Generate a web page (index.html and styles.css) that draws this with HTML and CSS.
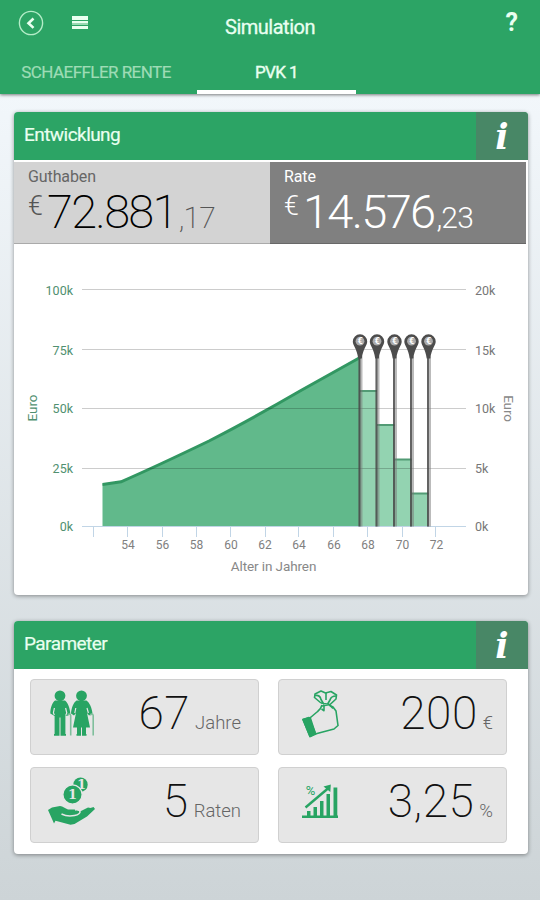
FILE: index.html
```html
<!DOCTYPE html>
<html lang="de">
<head>
    <meta charset="utf-8">
    <meta name="viewport" content="width=device-width, initial-scale=1">
    <title>Simulation</title>
    <link rel="stylesheet" href="styles.css">
</head>
<body>
    <header class="header">
        <div class="toolbar">
            <div class="toolbar-left">
                <svg class="back" viewBox="0 0 26 26">
                    <circle cx="13" cy="13" r="11.6"/>
                    <path class="arrow" d="M15.5 8.500l-5 4.700 5 4.700"/>
                </svg>
                <svg class="menu" viewBox="0 0 16 14">
                    <path d="M0 0h16v4H0zM0 5h16v2H0zM0 10h16v3H0z"/>
                    <path class="faded" d="M0 7h16v2H0z"/>
                </svg>
            </div>
            <h1 class="title">Simulation</h1>
            <div class="help">?</div>
        </div>
        <nav class="tabs">
            <div class="tab">SCHAEFFLER RENTE</div>
            <div class="tab active">PVK 1</div>
        </nav>
    </header>

    <main class="content">
        <section class="card">
            <div class="card-header">
                <h2 class="card-title">Entwicklung</h2>
                <div class="info">i</div>
            </div>
            <div class="totals">
                <div class="total balance">
                    <div class="total-label">Guthaben</div>
                    <div class="amount"><span class="currency">€</span><span class="whole">72.881</span><span class="cents">,17</span></div>
                </div>
                <div class="total rate">
                    <div class="total-label">Rate</div>
                    <div class="amount"><span class="currency">€</span><span class="whole">14.576</span><span class="cents">,23</span></div>
                </div>
            </div>
            <svg class="chart" viewBox="14 245 514 350">
                <defs>
                    <g id="pin">
                        <path class="stem-shadow" d="M.5 15V185"/>
                        <path class="stem" d="M-.5 15V185"/>
                        <path class="pin-body" d="M-7.200 0a7.200 7.200 0 1 1 14.400 0c0 4-4.200 7-5.400 17h-3.600c-1.200-10-5.400-13-5.400-17z"/>
                        <circle class="pin-face" cy="-.3" r="4.400"/>
                        <text class="pin-text" y="2.800">€</text>
                    </g>
                </defs>
                <path class="area" d="M102.500 484L121 481.500Q155 467 209 441Q250 420 300 391L360 357V526H102.500z"/>
                <path class="area-line" d="M102.500 484.500L121 481.800Q155 467 209 441Q250 420 300 391L360 357.500"/>
                <g class="bars">
                    <path d="M360 391h17v135h-17zM377 425h17.500v101H377zM394.500 459.500h17V526h-17zM411.500 493.500h17V526h-17z"/>
                    <path class="bar-tops" d="M360 391h17M377 425h17.500M394.500 459.500h17M411.500 493.500h17"/>
                </g>
                <path class="grid" d="M82 289.500h384M82 349.500h384M82 408.500h384M82 468.500h384"/>
                <path class="axis" d="M82 526.500h384M93.500 527v10M127.500 527v10M162.500 527v10M196.500 527v10M230.500 527v10M265.500 527v10M298.500 527v10M333.500 527v10M367.500 527v10M402.500 527v10M435.500 527v10"/>
                <use href="#pin" x="360" y="341.500"/>
                <use href="#pin" x="377" y="341.500"/>
                <use href="#pin" x="394.500" y="341.500"/>
                <use href="#pin" x="411.500" y="341.500"/>
                <use href="#pin" x="428.500" y="341.500"/>
                <g class="labels left">
                    <text x="73" y="294.500">100k</text>
                    <text x="73" y="354.500">75k</text>
                    <text x="73" y="413">50k</text>
                    <text x="73" y="473">25k</text>
                    <text x="73" y="531">0k</text>
                </g>
                <g class="labels">
                    <text x="475" y="294.500">20k</text>
                    <text x="475" y="354.500">15k</text>
                    <text x="475" y="413">10k</text>
                    <text x="475" y="473">5k</text>
                    <text x="475" y="531">0k</text>
                </g>
                <g class="labels years">
                    <text x="128" y="549">54</text>
                    <text x="162.500" y="549">56</text>
                    <text x="196.500" y="549">58</text>
                    <text x="231" y="549">60</text>
                    <text x="265" y="549">62</text>
                    <text x="299" y="549">64</text>
                    <text x="334" y="549">66</text>
                    <text x="368" y="549">68</text>
                    <text x="402.500" y="549">70</text>
                    <text x="436.500" y="549">72</text>
                </g>
                <text class="axis-title" x="273.500" y="571">Alter in Jahren</text>
                <text class="axis-title green" transform="translate(36.500 408) rotate(-90)">Euro</text>
                <text class="axis-title" transform="translate(504 408.500) rotate(90)">Euro</text>
            </svg>
        </section>

        <section class="card">
            <div class="card-header">
                <h2 class="card-title">Parameter</h2>
                <div class="info">i</div>
            </div>
            <div class="params">
                <div class="param">
                    <svg class="icon" viewBox="0 0 50 50">
                        <circle cx="13" cy="7.800" r="5.400"/>
                        <circle cx="34.500" cy="7.800" r="5.400"/>
                        <path d="M8 12.500h10c3 2 5 8 5.300 13l-3.300 2.500-1.600-1V46h.6v1.800h-5.500V29.500h-1V47.800H7V46h.6V28l-4.300-2.500C3.300 20 5 15 8 12.500z"/>
                        <path d="M29.500 12.500h10c3 2 5.300 7 6 13l-3.500 2-2-2.500 3 14.500h-4V46h.5v1.800H35V39.500h-1v8.300h-4.500V46h.5v-6.500h-4L29 25l-2 2.500-3-2c.5-6 2.500-11 5.500-13z"/>
                        <path class="highlight" d="M7.400 20l-1 5 1 2M18.600 20l1.200 5-1 2M28.800 20l-1 5M40 20l1.400 5"/>
                        <path class="cane" d="M21 27.500q0-1.500 1.300-1.500t1.400 1.500V47.500M43.500 27.500q0-1.500 1.300-1.500t1.400 1.500V47.500"/>
                    </svg>
                    <div class="value">67<span class="unit">Jahre</span></div>
                </div>
                <div class="param">
                    <svg class="icon outline" viewBox="0 0 50 50">
                        <path d="M19 14L12.500 8.500 13 5l6-3 4.500 2L29 2.500 34.500 6l-.5 4-6.500 6"/>
                        <path d="M13 6.500q5-1 6 4l3 5M24 4v7M34 7q-5 0-6 4l-3 5M19 14l9 1.500M20 17l8-1.500"/>
                        <path d="M20 16c-1 4-3 5-5 7L8.500 28.500 1 30.500l7 17 7-3 17-4.500 4-3.500-2-14.500-3-4-4-2"/>
                        <path d="M8 28l5 15.500M19.500 20l3 2M28 16.500l3 3M22 16v5"/>
                        <path class="solid" d="M1 30.500l6-2 6.500 16-5.500 3z"/>
                    </svg>
                    <div class="value">200<span class="unit">€</span></div>
                </div>
                <div class="param">
                    <svg class="icon" viewBox="0 0 50 50">
                        <circle cx="33.500" cy="8.700" r="7.200"/>
                        <text class="coin-text" x="34.500" y="12.500">1</text>
                        <circle class="coin" cx="25.500" cy="18.500" r="9.600"/>
                        <text class="coin-text" x="25.500" y="23">1</text>
                        <path d="M1 34l4-2.500 8-1.500c3 0 5 2.500 8 3.500h7l5 2 8-4 2.500.5 3-1 1.500 2-8 7.500-12.500 7.500-4 .8-15-4L7 47.500z"/>
                        <path class="palm" d="M14.500 38c4 2 8 2.500 13 1.500 4-.8 6-2.500 5.500-4.300-.5-2-3.500-1.700-5-1.200"/>
                    </svg>
                    <div class="value">5<span class="unit">Raten</span></div>
                </div>
                <div class="param">
                    <svg class="icon" viewBox="0 0 50 50">
                        <path d="M0 39.500h36V42H0zM5 35h3.500v5H5zM11.500 31H15v9h-3.500zM18 25h3.500v15H18zM24.500 18H28v22h-3.500zM31.500 11.500h3.800V40h-3.800z"/>
                        <path class="trend" d="M3.500 31.500L26.500 12"/>
                        <path d="M21.500 10.500L28.800 8.500l-.5 7.500z"/>
                        <text class="percent" x="8.500" y="19">%</text>
                    </svg>
                    <div class="value">3,25<span class="unit">%</span></div>
                </div>
            </div>
        </section>
    </main>
</body>
</html>
```
FILE: styles.css
```css
body {
    margin: 0;
    height: 900px;
    overflow: hidden;
    font-family: Roboto, "Liberation Sans", sans-serif;
    background: linear-gradient(#f2f7fb 94px, #cdd4d7);
}
h1, h2 {
    margin: 0;
    font-weight: 400;
}
.header {
    height: 94px;
    background-color: #2ca465;
    box-shadow: 0 1px 3px rgba(0, 0, 0, 0.5);
    color: #e9fff0;
}
.toolbar {
    display: grid;
    grid-template-columns: 1fr 1fr 1fr;
    height: 50px;
}
.toolbar-left {
    display: flex;
    align-items: flex-start;
    gap: 28px;
    padding: 10px 0 0 18px;
}
.back {
    width: 26px;
    height: 26px;
    fill: none;
    stroke: #b4edc8;
    stroke-width: 1.4;
}
.back .arrow {
    stroke: #e9fff0;
    stroke-width: 2.6;
}
.menu {
    width: 16px;
    height: 14px;
    margin-top: 6px;
    fill: #e9fff0;
}
.menu .faded {
    fill: #9ad9b3;
}
.title {
    padding-top: 15px;
    text-align: center;
    font-size: 20px;
    line-height: 24px;
    letter-spacing: -0.5px;
    -webkit-text-stroke: 0.3px;
}
.help {
    padding: 9px 22px 0 0;
    text-align: right;
    font-size: 25px;
    font-weight: 700;
    line-height: 28px;
}
.tabs {
    display: flex;
    height: 44px;
    gap: 5px;
}
.tab {
    box-sizing: border-box;
    width: 192px;
    padding-top: 12px;
    text-align: center;
    font-size: 17px;
    line-height: 20px;
    letter-spacing: -0.55px;
    color: #9edcb6;
    -webkit-text-stroke: 0.2px;
}
.tab.active {
    width: 159px;
    border-bottom: 4px solid #fff;
    color: #e9fff0;
    -webkit-text-stroke: 0.4px;
}
.content {
    display: flex;
    flex-direction: column;
    gap: 26px;
    padding: 18px 12px 0 14px;
}
.card {
    overflow: hidden;
    border-radius: 4px;
    background-color: #fff;
    box-shadow: 0 1px 4px rgba(0, 0, 0, 0.4);
}
.card-header {
    display: flex;
    justify-content: space-between;
    height: 48px;
    background-color: #2ca465;
    color: #e9fff0;
}
.card-title {
    padding: 10px 10px 0;
    font-size: 19px;
    line-height: 26px;
    letter-spacing: -0.55px;
    -webkit-text-stroke: 0.2px;
}
.info {
    width: 52px;
    background-color: #488766;
    color: #fff;
    text-align: center;
    font: italic 700 35px/50px "DejaVu Serif", serif;
}
.totals {
    display: flex;
    height: 82px;
    padding: 2px 2px 1px 0;
}
.total {
    flex: 1;
    padding: 5px 14px 0;
    border-bottom: 1px solid #aaa;
    background-color: #d3d3d3;
    box-sizing: border-box;
}
.total.rate {
    border-color: #686868;
    background-color: #808080;
    color: #fff;
}
.total-label {
    font-size: 16px;
    line-height: 20px;
    font-weight: 400;
    letter-spacing: -0.1px;
    color: #666;
}
.rate .total-label {
    color: #fff;
}
.amount {
    display: flex;
    align-items: baseline;
    height: 50px;
    line-height: 50px;
    font-weight: 300;
}
.currency {
    width: 19px;
    font-size: 27px;
    line-height: 28px;
    transform: translateY(-13px);
}
.whole {
    font-size: 47px;
    font-weight: 200;
    letter-spacing: -1.7px;
}
.cents {
    font-size: 30px;
    margin-left: 2px;
    letter-spacing: -0.8px;
}
.balance .currency, .balance .cents {
    color: #555;
}
.balance .cents {
    font-weight: 200;
}
.rate .whole {
    font-weight: 300;
}
.chart {
    display: block;
    width: 514px;
    height: 350px;
}
.area {
    fill: #61b98b;
}
.area-line {
    fill: none;
    stroke: #329762;
    stroke-width: 3;
}
.bars {
    fill: #93d3b1;
}
.bar-tops {
    stroke: #529b75;
    stroke-width: 2;
}
.grid {
    stroke: #000;
    stroke-opacity: 0.2;
}
.axis {
    fill: none;
    stroke: #c1d5e6;
}
.stem {
    stroke: #3d3d3d;
    stroke-width: 2;
    stroke-opacity: 0.7;
}
.stem-shadow {
    stroke: #777;
    stroke-width: 4;
    stroke-opacity: 0.5;
}
.pin-body {
    fill: #4c4c4c;
}
.pin-face {
    fill: #aaa;
}
.pin-text {
    font-size: 9px;
    font-weight: 700;
    text-anchor: middle;
    fill: #fff;
}
.labels {
    font-size: 12.500px;
    fill: #777;
}
.labels.left {
    text-anchor: end;
    fill: #509070;
}
.labels.years {
    font-size: 12px;
    text-anchor: middle;
    fill: #808080;
}
.axis-title {
    font-size: 13.500px;
    letter-spacing: -0.1px;
    text-anchor: middle;
    fill: #888;
}
.axis-title.green {
    fill: #509070;
}
.params {
    display: grid;
    grid-template-columns: 229px 229px;
    gap: 12px 19px;
    padding: 10px 16px 11px;
}
.param {
    display: flex;
    justify-content: space-between;
    box-sizing: border-box;
    height: 76px;
    padding: 8px 17px 0 16px;
    border: 1px solid #d0d0d0;
    border-radius: 4px;
    background-color: #e6e6e6;
}
.param:nth-child(even) {
    padding-left: 23px;
    padding-right: 13px;
}
.icon {
    width: 50px;
    height: 50px;
    fill: #28a463;
}
.icon.outline {
    margin-top: 1px;
    fill: none;
    stroke: #28a463;
    stroke-width: 1.6;
    stroke-linejoin: round;
}
.outline .solid {
    fill: #28a463;
}
.highlight, .palm {
    fill: none;
    stroke: #e6e6e6;
    stroke-width: 1.2;
}
.palm {
    stroke-width: 1.5;
}
.cane {
    fill: none;
    stroke: #7fbf9c;
    stroke-width: 1.6;
}
.coin {
    stroke: #e6e6e6;
    stroke-width: 1.2;
}
.coin-text {
    font: 700 13px "DejaVu Serif", serif;
    text-anchor: middle;
    fill: #e6e6e6;
}
.trend {
    stroke: #28a463;
    stroke-width: 2.4;
}
.percent {
    font-size: 13px;
    text-anchor: middle;
}
.value {
    font-size: 46px;
    line-height: 50px;
    font-weight: 200;
    letter-spacing: 0.5px;
    color: #111;
    white-space: nowrap;
}
.unit {
    margin-left: 5px;
    font-size: 18.500px;
    font-weight: 300;
    letter-spacing: 0;
    color: #666;
}
```
